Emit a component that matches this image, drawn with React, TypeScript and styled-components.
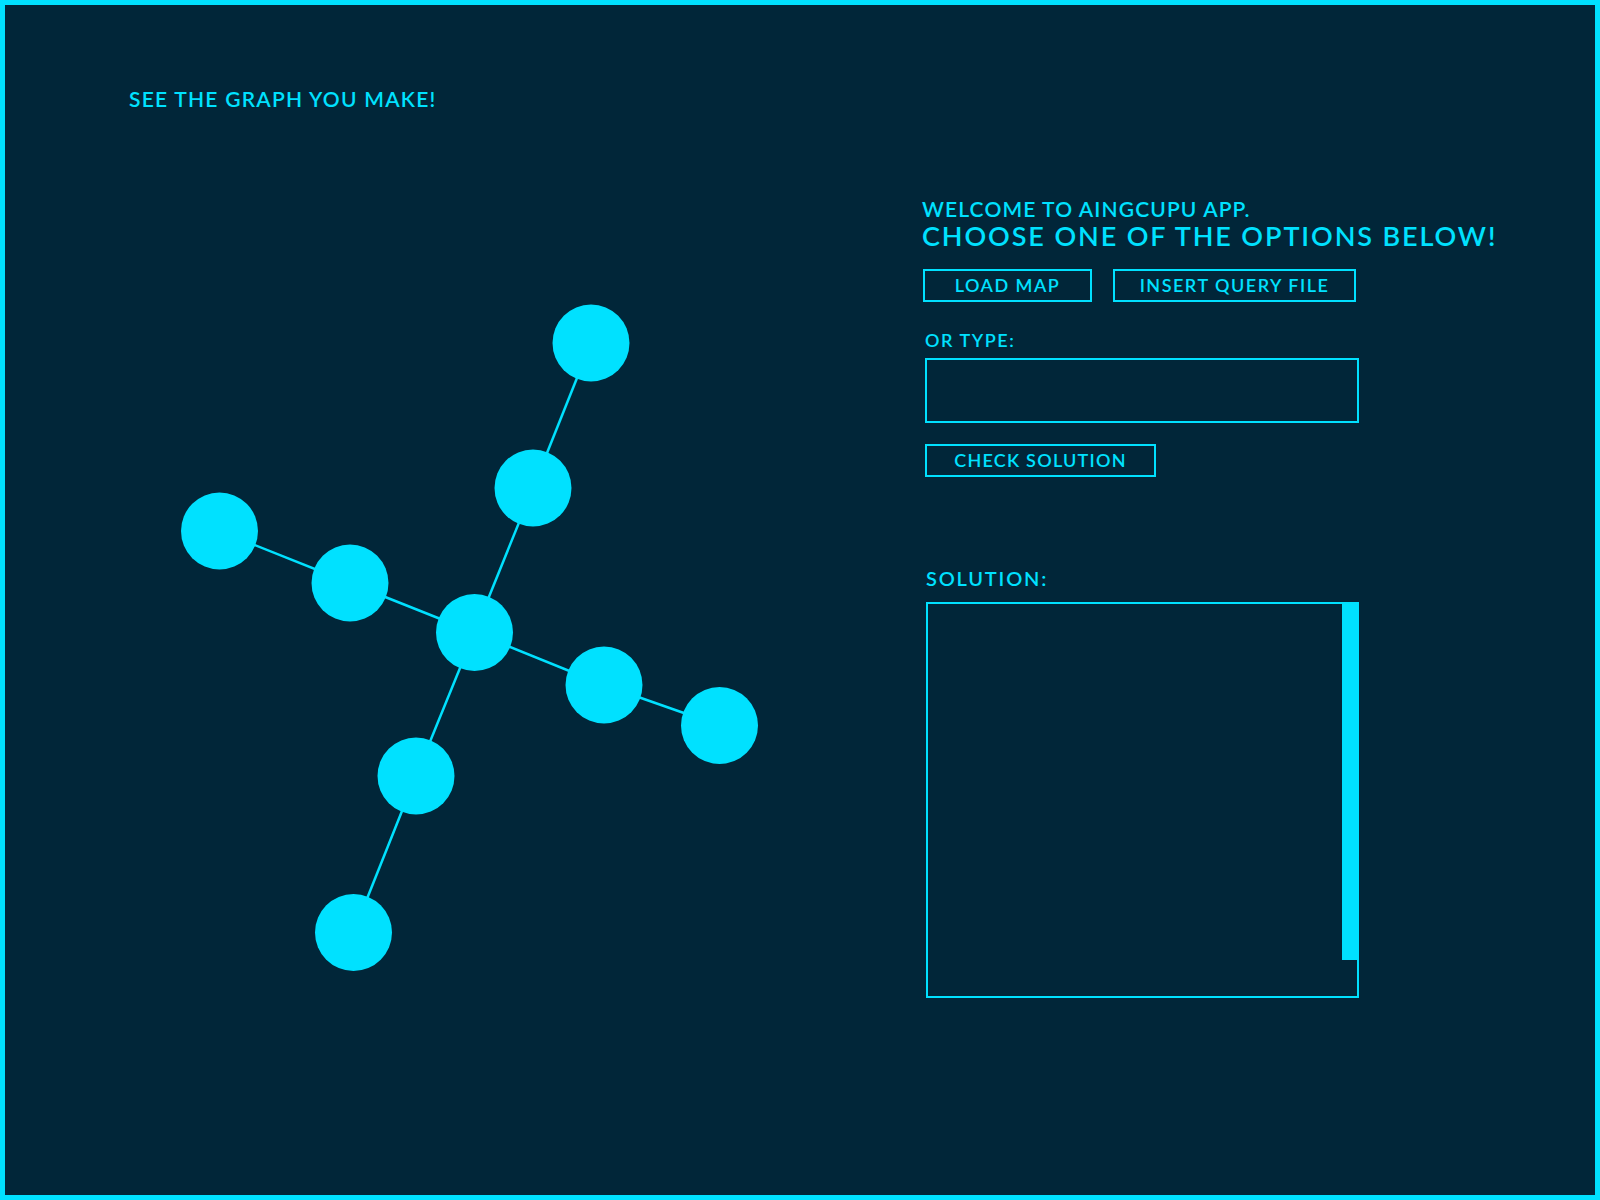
import styled, { createGlobalStyle } from "styled-components";

const CYAN = "#00e1ff";
const NAVY = "#012639";

const GlobalStyle = createGlobalStyle`
  html, body {
    margin: 0;
    padding: 0;
    background: ${NAVY};
  }
  * {
    box-sizing: border-box;
  }
`;

type Node = { id: string; x: number; y: number };

const nodes: Node[] = [
  { id: "a", x: 591, y: 343 },
  { id: "b", x: 533, y: 488 },
  { id: "c", x: 474.5, y: 632.5 },
  { id: "d", x: 219.5, y: 531 },
  { id: "e", x: 350, y: 583 },
  { id: "f", x: 604, y: 685 },
  { id: "g", x: 719.5, y: 725.5 },
  { id: "h", x: 416, y: 776 },
  { id: "i", x: 353.5, y: 932.5 },
];

const edges: [string, string][] = [
  ["a", "b"],
  ["b", "c"],
  ["c", "h"],
  ["h", "i"],
  ["d", "e"],
  ["e", "c"],
  ["c", "f"],
  ["f", "g"],
];

const byId = (id: string) => nodes.find((n) => n.id === id)!;

export default function App() {
  return (
    <>
      <GlobalStyle />
      <Frame>
        <GraphColumn>
          <GraphTitle>SEE THE GRAPH YOU MAKE!</GraphTitle>
          <GraphCanvas viewBox="5 111 917 1084" width={917} height={1084}>
            {edges.map(([from, to]) => {
              const p = byId(from);
              const q = byId(to);
              return (
                <line
                  key={from + to}
                  x1={p.x}
                  y1={p.y}
                  x2={q.x}
                  y2={q.y}
                  stroke={CYAN}
                  strokeWidth={2.5}
                />
              );
            })}
            {nodes.map((n) => (
              <circle key={n.id} cx={n.x} cy={n.y} r={38.5} fill={CYAN} />
            ))}
          </GraphCanvas>
        </GraphColumn>

        <Panel>
          <Welcome>WELCOME TO AINGCUPU APP.</Welcome>
          <Headline>CHOOSE ONE OF THE OPTIONS BELOW!</Headline>
          <ButtonRow>
            <OutlineButton $width={169}>LOAD MAP</OutlineButton>
            <OutlineButton $width={243}>INSERT QUERY FILE</OutlineButton>
          </ButtonRow>
          <Form>
            <FieldLabel>OR TYPE:</FieldLabel>
            <QueryInput />
            <OutlineButton $width={231} $spacing={1.25}>
              CHECK SOLUTION
            </OutlineButton>
            <SolutionLabel>SOLUTION:</SolutionLabel>
            <SolutionBox>
              <ScrollThumb />
            </SolutionBox>
          </Form>
        </Panel>
      </Frame>
    </>
  );
}

const Frame = styled.div`
  width: 1600px;
  height: 1200px;
  border: 5px solid ${CYAN};
  background: ${NAVY};
  display: grid;
  grid-template-columns: 917px 1fr;
  overflow: hidden;
  font-family: Lato, "Noto Sans", sans-serif;
  color: ${CYAN};
`;

const GraphColumn = styled.div`
  display: flex;
  flex-direction: column;
  padding-top: 82px;
`;

const GraphTitle = styled.h2`
  margin: 0 0 0 124px;
  font-size: 21px;
  line-height: 24px;
  font-weight: 600;
  letter-spacing: 1.25px;
`;

const GraphCanvas = styled.svg`
  display: block;
`;

const Panel = styled.div`
  display: flex;
  flex-direction: column;
  align-items: flex-start;
  padding-top: 192px;
`;

const Welcome = styled.div`
  font-size: 21px;
  line-height: 24px;
  font-weight: 600;
  letter-spacing: 1.12px;
`;

const Headline = styled.h1`
  margin: 0;
  font-size: 27px;
  line-height: 30px;
  font-weight: 600;
  letter-spacing: 1.9px;
`;

const ButtonRow = styled.div`
  display: flex;
  gap: 21px;
  margin: 18px 0 0 1px;
`;

const OutlineButton = styled.button<{ $width: number; $spacing?: number }>`
  width: ${(p) => p.$width}px;
  height: 33px;
  padding: 0;
  border: 2px solid ${CYAN};
  background: transparent;
  color: ${CYAN};
  font-family: inherit;
  font-size: 18px;
  line-height: 29px;
  font-weight: 600;
  letter-spacing: ${(p) => p.$spacing ?? 1.5}px;
  text-align: center;
  cursor: pointer;
`;

const Form = styled.div`
  display: flex;
  flex-direction: column;
  align-items: flex-start;
  margin: 27px 0 0 3px;

  & > ${OutlineButton} {
    margin-top: 21px;
  }
`;

const FieldLabel = styled.label`
  font-size: 18px;
  line-height: 22px;
  font-weight: 600;
  letter-spacing: 1.55px;
`;

const QueryInput = styled.textarea`
  width: 434px;
  height: 65px;
  margin-top: 7px;
  border: 2px solid ${CYAN};
  background: transparent;
  color: ${CYAN};
  resize: none;
  outline: none;
  font-family: inherit;
  font-size: 18px;
  padding: 8px 10px;
`;

const SolutionLabel = styled.div`
  margin: 89px 0 0 1px;
  font-size: 20px;
  line-height: 24px;
  font-weight: 600;
  letter-spacing: 1.8px;
`;

const SolutionBox = styled.div`
  position: relative;
  width: 433px;
  height: 396px;
  margin: 12px 0 0 1px;
  border: 2px solid ${CYAN};
`;

const ScrollThumb = styled.div`
  position: absolute;
  top: -2px;
  right: -2px;
  width: 17px;
  height: 358px;
  background: ${CYAN};
`;
